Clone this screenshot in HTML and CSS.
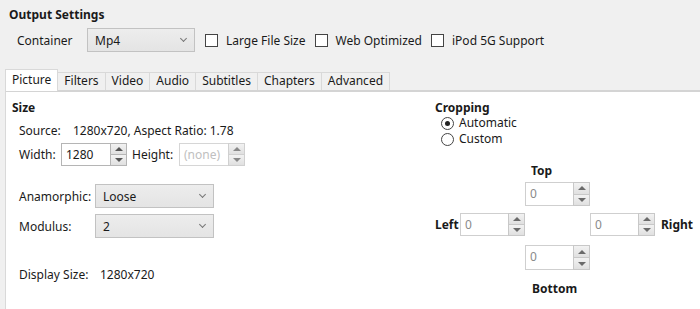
FILE: index.html
```html
<!DOCTYPE html>
<html>
<head>
<meta charset="utf-8">
<link rel="stylesheet" href="styles.css">
</head>
<body>
<div class="app">
  <div class="section-title">Output Settings</div>
  <div class="container-row">
    <span class="lbl container-lbl">Container</span>
    <div class="combo combo-container"><span>Mp4</span><span class="chev"></span></div>
    <label class="check"><span class="box"></span>Large File Size</label>
    <label class="check"><span class="box"></span>Web Optimized</label>
    <label class="check"><span class="box"></span>iPod 5G Support</label>
  </div>
  <div class="tabs">
    <div class="tab active">Picture</div>
    <div class="tab">Filters</div>
    <div class="tab">Video</div>
    <div class="tab">Audio</div>
    <div class="tab">Subtitles</div>
    <div class="tab">Chapters</div>
    <div class="tab">Advanced</div>
  </div>
  <div class="panel">
    <div class="col-left">
      <div class="group-title">Size</div>
      <div class="source-row"><span class="source-lbl">Source:</span><span>1280x720, Aspect Ratio: 1.78</span></div>
      <div class="wh-row">
        <span class="lbl">Width:</span>
        <div class="spin w-spin"><div class="spin-input">1280</div><div class="spin-btns"><span class="up"></span><span class="down"></span></div></div>
        <span class="lbl height-lbl">Height:</span>
        <div class="spin w-spin disabled"><div class="spin-input">(none)</div><div class="spin-btns"><span class="up"></span><span class="down"></span></div></div>
      </div>
      <div class="combo-row anam-row">
        <span class="lbl row-lbl">Anamorphic:</span>
        <div class="combo combo-wide"><span>Loose</span><span class="chev"></span></div>
      </div>
      <div class="combo-row mod-row">
        <span class="lbl row-lbl">Modulus:</span>
        <div class="combo combo-wide"><span>2</span><span class="chev"></span></div>
      </div>
      <div class="display-row"><span class="display-lbl">Display Size:</span><span>1280x720</span></div>
    </div>
    <div class="col-right">
      <div class="group-title">Cropping</div>
      <div class="radios">
        <label class="radio"><span class="circle checked"></span>Automatic</label>
        <label class="radio"><span class="circle"></span>Custom</label>
      </div>
      <div class="crop-grid">
        <div class="crop-top-lbl">Top</div>
        <div class="spin c-spin muted crop-top"><div class="spin-input">0</div><div class="spin-btns"><span class="up"></span><span class="down"></span></div></div>
        <div class="crop-left-lbl">Left</div>
        <div class="spin c-spin muted crop-left"><div class="spin-input">0</div><div class="spin-btns"><span class="up"></span><span class="down"></span></div></div>
        <div class="spin c-spin muted crop-right"><div class="spin-input">0</div><div class="spin-btns"><span class="up"></span><span class="down"></span></div></div>
        <div class="crop-right-lbl">Right</div>
        <div class="spin c-spin muted crop-bottom"><div class="spin-input">0</div><div class="spin-btns"><span class="up"></span><span class="down"></span></div></div>
        <div class="crop-bottom-lbl">Bottom</div>
      </div>
    </div>
  </div>
</div>
</body>
</html>
```
FILE: styles.css
```css
* { box-sizing: border-box; }
html, body { margin: 0; padding: 0; }
body {
  width: 700px;
  height: 309px;
  overflow: hidden;
  background: #f0f0f0;
  font-family: "Noto Sans", "Open Sans", sans-serif;
  font-size: 12px;
  color: #1a1a1a;
}
.app { display: flex; flex-direction: column; height: 309px; }
.section-title {
  font-weight: bold;
  padding: 6px 0 0 9px;
  line-height: 17px;
  height: 23px;
}
.container-row {
  display: flex;
  align-items: center;
  margin-top: 5px;
  height: 24px;
  padding-left: 17px;
}
.container-lbl { width: 70px; }
.combo {
  display: flex;
  align-items: center;
  justify-content: space-between;
  height: 24px;
  border: 1px solid #c2c2c2;
  background: linear-gradient(#ededed, #e4e4e4);
  padding: 0 8px 0 7px;
}
.combo-container { width: 108px; margin-right: 10px; }
.chev {
  width: 5px; height: 5px;
  border-right: 1px solid #777;
  border-bottom: 1px solid #777;
  transform: rotate(45deg);
  margin-top: -3px;
}
.check { display: flex; align-items: center; margin-right: 9px; padding-top: 1px; }
.box {
  width: 13px; height: 13px;
  border: 1px solid #444;
  background: #fff;
  margin-right: 8px;
}
.tabs {
  display: flex;
  align-items: flex-end;
  margin-top: 17px;
  padding-left: 5px;
  height: 21px;
  position: relative;
  z-index: 1;
}
.tab {
  height: 18px;
  line-height: 16px;
  padding: 0 6px;
  border: 1px solid #d9d9d9;
  border-bottom: none;
  border-left: none;
  background: #f0f0f0;
}
.tab.active {
  line-height: 20px;
  background: #fff;
  border-left: 1px solid #d9d9d9;
  margin-bottom: -1px;
  height: 22px;
}
.panel {
  flex: 1;
  margin-left: 5px;
  background: #fff;
  border-left: 1px solid #d9d9d9;
  border-top: 2px solid #d4d4d4;
  display: flex;
}
.col-left { width: 429px; padding-left: 6px; }
.col-right { flex: 1; }
.group-title { font-weight: bold; margin-top: 7px; line-height: 17px; }
.source-row { margin-top: 6px; padding-left: 7px; line-height: 17px; }
.source-lbl { display: inline-block; width: 54px; }
.wh-row { display: flex; align-items: center; margin-top: 4px; padding-left: 7px; height: 23px; }
.wh-row .lbl { width: 42px; }
.wh-row .height-lbl { width: 47px; margin-left: 5px; }
.spin { display: flex; height: 23px; }
.spin-input {
  border: 1px solid #b5b5b5;
  border-right: none;
  background: #fff;
  line-height: 21px;
  padding-left: 4px;
  flex: 1;
}
.spin-btns { display: flex; flex-direction: column; width: 17px; }
.spin-btns span {
  flex: 1;
  border: 1px solid #b5b5b5;
  background: linear-gradient(#f2f2f2, #e0e0e0);
  display: flex; align-items: center; justify-content: center;
}
.spin-btns span + span { border-top: none; }
.spin-btns .up::after {
  content: ""; border-left: 4px solid transparent; border-right: 4px solid transparent;
  border-bottom: 4px solid #555;
}
.spin-btns .down::after {
  content: ""; border-left: 4px solid transparent; border-right: 4px solid transparent;
  border-top: 4px solid #555;
}
.w-spin { width: 66px; }
.disabled .spin-input { color: #c0c0c0; border-color: #d6d6d6; }
.disabled .spin-btns span { border-color: #d0d0d0; }
.disabled .spin-btns .up::after { border-bottom-color: #888; }
.disabled .spin-btns .down::after { border-top-color: #888; }
.muted .spin-input { color: #8a8a8a; border-color: #cfcfcf; }
.muted .spin-btns span { border-color: #c8c8c8; }
.muted .spin-btns .up::after { border-bottom-color: #6a6a6a; }
.muted .spin-btns .down::after { border-top-color: #6a6a6a; }
.combo-row { display: flex; align-items: center; padding-left: 7px; }
.row-lbl { width: 76px; }
.combo-wide { width: 119px; }
.anam-row { margin-top: 18px; }
.mod-row { margin-top: 6px; }
.display-row { margin-top: 28px; padding-left: 7px; line-height: 17px; }
.display-lbl { display: inline-block; width: 81px; }
.radios { padding-left: 6px; margin-top: -1px; }
.radio { display: flex; align-items: center; line-height: 16px; }
.circle {
  width: 13px; height: 13px; border-radius: 50%;
  border: 1px solid #444; background: #fff; margin-right: 5px;
  display: flex; align-items: center; justify-content: center;
}
.circle.checked::after {
  content: ""; width: 5px; height: 5px; border-radius: 50%; background: #222;
}
.crop-grid {
  display: grid;
  grid-template-columns: 25px 65px 65px 65px auto;
  grid-template-rows: 18px 2px 24px 7px 23px 9px 25px 10px 18px;
  margin-top: 15px;
}
.c-spin { width: 65px; }
.crop-top-lbl { grid-column: 3; grid-row: 1; font-weight: bold; padding-left: 6px; line-height: 18px; }
.crop-top { grid-column: 3; grid-row: 3; height: 24px; }
.crop-left-lbl { grid-column: 1; grid-row: 5; font-weight: bold; align-self: center; }
.crop-left { grid-column: 2; grid-row: 5; }
.crop-right { grid-column: 4; grid-row: 5; }
.crop-right-lbl { grid-column: 5; grid-row: 5; font-weight: bold; align-self: center; padding-left: 6px; }
.crop-bottom { grid-column: 3; grid-row: 7; height: 25px; }
.crop-bottom-lbl { grid-column: 3; grid-row: 9; font-weight: bold; padding-left: 7px; line-height: 18px; }
```
